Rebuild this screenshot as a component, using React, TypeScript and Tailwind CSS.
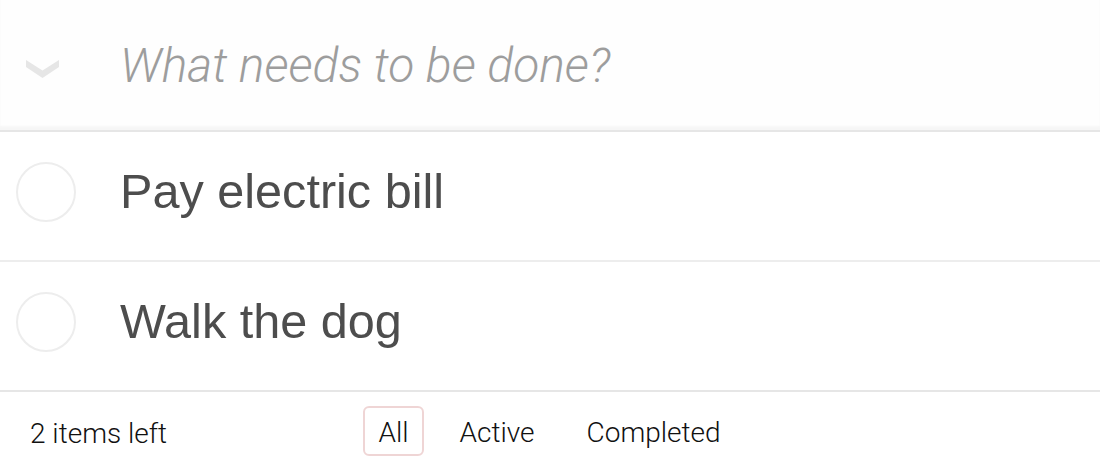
import React from "react";

const todos = [
  { id: 1, title: "Pay electric bill" },
  { id: 2, title: "Walk the dog" },
];

const filters = ["All", "Active", "Completed"];

const App = () => {
  return (
    <div className="w-[1100px] h-[472px] overflow-hidden bg-white font-['Roboto',sans-serif]">
      {/* Header with new todo input */}
      <header className="relative h-[130px] bg-[rgba(0,0,0,0.003)] shadow-[inset_0_-4px_2px_rgba(0,0,0,0.03)]">
        <svg
          className="absolute left-[26px] top-[60px]"
          width="34"
          height="19"
          viewBox="26 60 34 19"
        >
          <polygon points="26,60 42.5,70.5 59,60 59,67 42.5,78 26,67" fill="#e6e6e6" />
        </svg>
        <input
          className="w-full h-full pl-[120px] pr-[32px] py-[32px] bg-transparent outline-none text-[48px] leading-[1.4] text-[#4d4d4d] font-['Roboto',sans-serif] font-light placeholder:italic placeholder:text-[#9d9d9d]"
          placeholder="What needs to be done?"
        />
      </header>

      {/* Todo list */}
      <ul className="border-t-2 border-[#e6e6e6]">
        {todos.map((todo, i) => (
          <li
            key={todo.id}
            className={
              i < todos.length - 1
                ? "flex items-start h-[130px] pt-[30px] border-b-2 border-[#ededed]"
                : "flex items-start h-[128px] pt-[30px]"
            }
          >
            <div className="ml-[16px] w-[60px] h-[60px] rounded-full border-2 border-[#ededed]" />
            <label className="ml-[44px] text-[48.6px] leading-[1.2] text-[#4d4d4d] font-['Liberation_Sans',Arial,sans-serif]">
              {todo.title}
            </label>
          </li>
        ))}
      </ul>

      {/* Footer */}
      <footer className="relative h-[82px] border-t-2 border-[#e6e6e6] px-[30px] pt-[22px] pb-[18px] text-[28px] font-light text-[#111] leading-[40px]">
        <span className="float-left">2 items left</span>
        <ul className="absolute left-0 right-0 top-[14px] flex justify-center gap-[8px]">
          {filters.map((f) => (
            <li key={f} className="mx-[6px]">
              <a
                className={
                  f === "All"
                    ? "block px-[13px] pt-[6px] pb-[2px] leading-[38px] rounded-[6px] border-2 border-[rgba(175,47,47,0.2)]"
                    : "block px-[14px] pt-[6px] pb-[2px] leading-[38px] rounded-[6px] border-2 border-transparent"
                }
              >
                {f}
              </a>
            </li>
          ))}
        </ul>
      </footer>
    </div>
  );
};

export default App;
